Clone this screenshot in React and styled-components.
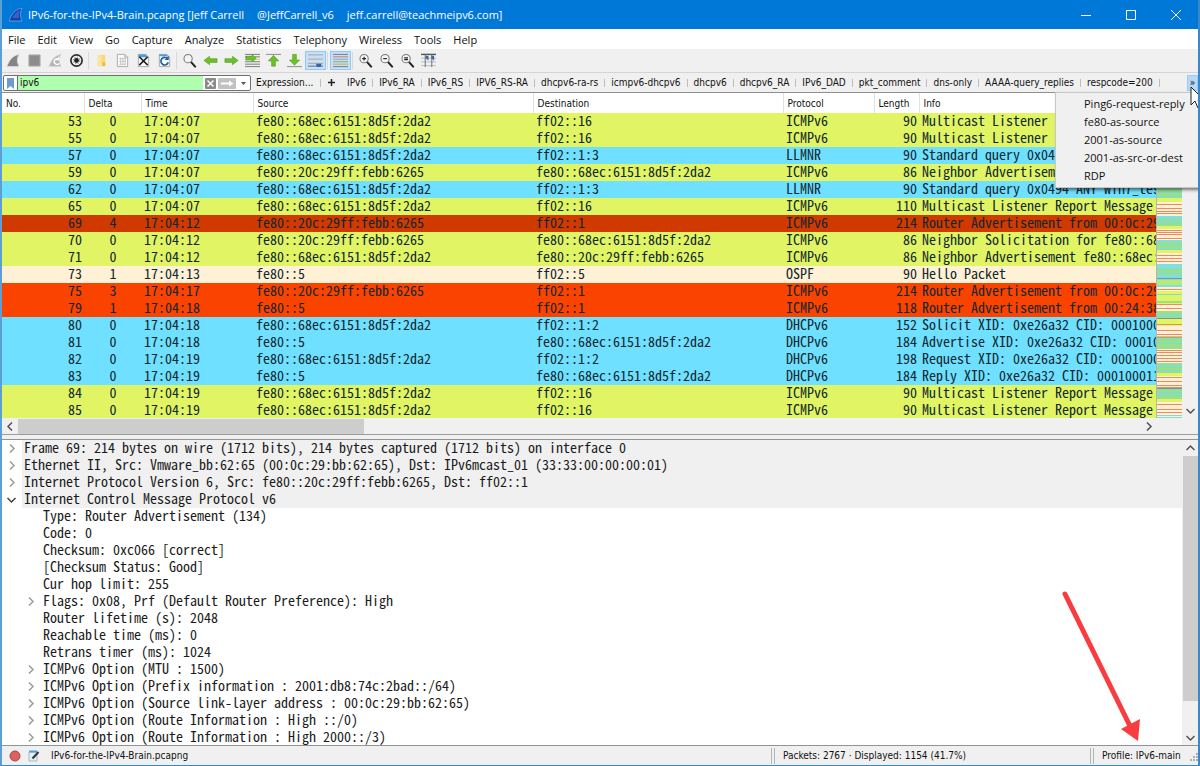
import React from "react";
import styled, { createGlobalStyle } from "styled-components";

const MONO = '"Noto Sans Mono CJK SC", "DejaVu Sans Mono", monospace';
const UI = '"Open Sans", "Noto Sans", sans-serif';
const SMALL = '"DejaVu Sans Condensed", "DejaVu Sans", sans-serif';

const ROW_COLORS = {
  icmp: { bg: "#e1f564", fg: "#12272e" },
  udp: { bg: "#6fe0ff", fg: "#12272e" },
  marked: { bg: "#d03900", fg: "#12272e" },
  router: { bg: "#fb4300", fg: "#12272e" },
  ospf: { bg: "#fff1d6", fg: "#12272e" },
};

const GlobalStyle = createGlobalStyle`
  * { box-sizing: border-box; }
  body { margin: 0; background: #fff; }
  button, input { font: inherit; color: inherit; margin: 0; }
  button { border: 0; padding: 0; background: none; white-space: nowrap; }
`;

const Window = styled.div`
  display: flex;
  flex-direction: column;
  height: 100vh;
  overflow: hidden;
  position: relative;
  border-left: 2px solid #5b9fd4;
  border-right: 2px solid #3b87cb;
  border-bottom: 1px solid #2b8bd4;
  background: #f0f0f0;
  font: 11px/18px ${UI};
  color: #111;
`;

const TitleBar = styled.header`
  display: flex;
  align-items: center;
  height: 29px;
  flex: none;
  margin: 0 -2px;
  padding: 0 2px 0 9px;
  background: #0078d7;
  color: #fff;
`;

const Title = styled.h1`
  display: flex;
  gap: 13px;
  flex: 1;
  margin: 0 0 0 5px;
  font: inherit;
  white-space: nowrap;
`;

const CaptionButton = styled.button`
  display: flex;
  align-items: center;
  justify-content: center;
  width: 45px;
  height: 29px;
`;

const MenuBar = styled.nav`
  display: flex;
  flex: none;
  height: 20px;
  padding: 2px 0 0;
  background: #fff;
`;

const MenuButton = styled.button`
  padding: 0 6px;
  line-height: 18px;
`;

const ToolBar = styled.div`
  display: flex;
  align-items: center;
  flex: none;
  height: 24px;
  padding-left: 1px;
  border-bottom: 1px solid #d4d4d4;
`;

const ToolButton = styled.button`
  display: flex;
  align-items: center;
  justify-content: center;
  width: 21px;
  height: 19px;
  border: 1px solid ${(p) => (p.$on ? "#90c8f6" : "transparent")};
  background: ${(p) => (p.$on ? "#c5e0f8" : "transparent")};
`;

const ToolDivider = styled.span`
  width: 1px;
  height: 17px;
  margin: 0 2px 0 1px;
  background: #d8d8d8;
`;

const FilterBar = styled.form`
  display: flex;
  align-items: center;
  flex: none;
  height: 20px;
  padding: 1px 0 0 1px;
  border-bottom: 1px solid #8f8f8f;
  font: 10px/16px ${SMALL};
`;

const FilterBox = styled.div`
  display: flex;
  align-items: center;
  width: 248px;
  height: 16px;
  flex: none;
  border: 1px solid #707070;
  border-radius: 2px;
  background: #fff;
`;

const FilterIconButton = styled.button`
  display: flex;
  align-items: center;
  justify-content: center;
  width: ${(p) => p.$width}px;
  height: 14px;
`;

const FilterInput = styled.input`
  flex: 1;
  min-width: 0;
  height: 14px;
  border: 0;
  border-left: 1px solid #707070;
  padding: 0 0 0 2px;
  outline: 0;
  background: #afffaf;
`;

const ExpressionButton = styled.button`
  width: 68px;
  margin-left: 1px;
  padding: 0 4px;
  text-align: left;
`;

const AddButton = styled.button`
  width: 20px;
`;

const FilterButton = styled.button`
  padding: 0 6px;
`;

const FilterDivider = styled.span`
  width: 1px;
  height: 8px;
  background: #bdbdbd;
`;

const MoreButton = styled.button`
  width: 11px;
  height: 16px;
  margin-left: auto;
  background: #b5d9f6;
  border: 1px solid #9accf5;
  line-height: 12px;
`;

const PacketPane = styled.section`
  flex: none;
  background: #fff;
  border-bottom: 1px solid #9c9c9c;
`;

const PacketBody = styled.div`
  display: flex;
  max-height: 325px;
  overflow: hidden;
`;

const TableClip = styled.div`
  flex: 1;
  min-width: 0;
  overflow: hidden;
  background: #fff;
`;

const PacketTable = styled.table`
  width: 100%;
  table-layout: fixed;
  border-collapse: collapse;
  font: 14px/15px ${MONO};
`;

const HeadCell = styled.th`
  width: ${(p) => p.$width};
  height: 20px;
  padding: 2px 4px 0;
  border-right: 1px solid #e2e2e2;
  background: #fff;
  font: 10px/18px ${SMALL};
  text-align: left;
`;

const PacketRow = styled.tr`
  background: ${(p) => ROW_COLORS[p.$kind].bg};
  color: ${(p) => ROW_COLORS[p.$kind].fg};
`;

const Cell = styled.td`
  height: 17px;
  padding: 0 2px 2px 3px;
  white-space: nowrap;
  text-align: ${(p) => p.$align || "left"};
`;

const MiniMap = styled.div`
  width: 26px;
  flex: none;
  padding-top: 20px;
  border-left: 1px solid #b5b5b5;
`;

const Scrollbar = styled.div`
  display: flex;
  flex-direction: ${(p) => (p.$horizontal ? "row" : "column")};
  justify-content: space-between;
  align-items: center;
  flex: none;
  width: ${(p) => (p.$horizontal ? "auto" : "16px")};
  height: ${(p) => (p.$horizontal ? "16px" : "auto")};
  padding-right: ${(p) => (p.$horizontal ? "42px" : "0")};
  background: #f0f0f0;
`;

const ScrollButton = styled.button`
  display: flex;
  align-items: center;
  justify-content: center;
  width: 16px;
  height: 16px;
`;

const HorizontalThumb = styled.div`
  width: 30%;
  height: 15px;
  margin-right: auto;
  background: #cdcdcd;
`;

const VerticalThumb = styled.div`
  width: 15px;
  flex: 0 0 245px;
  margin-bottom: auto;
  background: #cdcdcd;
`;

const DetailPane = styled.section`
  display: flex;
  flex: 1;
  min-height: 0;
  margin-top: 4px;
  border-top: 1px solid #8f9494;
  background: #fff;
`;

const Tree = styled.ul`
  flex: 1;
  min-width: 0;
  margin: 0;
  padding: 0 0 0 2px;
  overflow: hidden;
  list-style: none;
  font: 14px/15px ${MONO};
  color: #1b1b1b;
`;

const TreeItem = styled.li`
  display: flex;
  height: 17px;
  padding-left: ${(p) => (p.$child ? 19 : 0)}px;
  white-space: pre;
`;

const TreeToggle = styled.span`
  display: flex;
  align-items: center;
  justify-content: center;
  width: 15px;
  flex: none;
  margin-right: 3px;
`;

const TreeText = styled.span`
  flex: 1;
  padding: 0 0 2px 2px;
  background: ${(p) => (p.$shaded ? "#f0f0f0" : "transparent")};
`;

const StatusBar = styled.footer`
  display: flex;
  align-items: center;
  flex: none;
  height: 20px;
  border-top: 1px solid #8f9494;
  font: 10px/18px ${SMALL};
`;

const StatusButton = styled.button`
  display: flex;
  justify-content: center;
  width: 19px;
  margin-left: ${(p) => (p.$first ? 3 : 0)}px;
`;

const StatusText = styled.span`
  flex: ${(p) => p.$flex};
  padding-left: 8px;
  white-space: nowrap;
`;

const StatusGrip = styled.span`
  width: 4px;
  height: 16px;
  border: 1px solid #b4b4b4;
  border-width: 0 1px;
`;

const Popup = styled.ul`
  position: absolute;
  top: 92px;
  right: -2px;
  width: 145px;
  margin: 0;
  padding: 2px 0;
  list-style: none;
  background: #f0f0f0;
  border: 1px solid #c8c8c8;
  box-shadow: 2px 2px 3px rgba(0, 0, 0, 0.5);
`;

const PopupItem = styled.button`
  display: block;
  width: 100%;
  padding-left: 28px;
  font: 11px/18px ${UI};
  text-align: left;
`;

const Pointer = styled.svg`
  position: absolute;
  top: 86px;
  right: -8px;
`;

const Arrow = styled.svg`
  position: absolute;
  right: 56px;
  bottom: 21px;
`;

const Chevron = ({ dir, color = "#505050" }) => {
  const d = {
    left: "M6 .5 2 4.500 6 8.500",
    right: "M3 .5 7 4.500 3 8.500",
    up: "M.5 6 4.500 2 8.500 6",
    down: "M.5 3 4.500 7 8.500 3",
  }[dir];
  return (
    <svg width="9" height="9" viewBox="0 0 9 9" fill="none" stroke={color} strokeWidth="1.5">
      <path d={d} />
    </svg>
  );
};

const Page = () => (
  <>
    <path d="M2.5 1.5h8l3 3v10h-11z" fill="#fafafa" stroke="#a8a8a8" />
    <path d="M10.5 1.5v3h3" fill="none" stroke="#a8a8a8" />
  </>
);

const Lens = ({ children }) => (
  <>
    <path d="m9.5 9.500 4.500 5" stroke="#222" strokeWidth="2.200" strokeLinecap="round" />
    <circle cx="6.500" cy="6" r="4.400" fill="#f4f4f4" stroke="#777" strokeWidth="1.100" />
    <g stroke="#222" strokeWidth="1.200">{children}</g>
  </>
);

const Lines = ({ colors }) =>
  colors.map((c, i) => <path key={i} d={`M0 ${1.5 + i * 2.6}h16`} stroke={c} strokeWidth="1" />);

const GREEN = { fill: "#6cc02a", stroke: "#4c9a18", strokeWidth: 0.6 };

const ICONS = {
  start: <path d="M1 14.500C3 8 7 2.500 14 1.500c-2.500 4-2.500 8 0 13z" fill="#858585" stroke="#dadada" />,
  stop: <path d="M2 2h12v12H2z" fill="#8c8c8c" stroke="#b4b4b4" />,
  restart: (
    <>
      <path d="M1 14.500C3 8 7 2.500 14 1.500c-2.500 4-2.500 8 0 13z" fill="#b4b4b4" stroke="#dadada" />
      <path d="M11 6.500a3 3 0 1 0 1 4.500M11.500 4v3H8.500" fill="none" stroke="#fff" strokeWidth="1.500" />
    </>
  ),
  options: (
    <>
      <circle cx="8" cy="8" r="6" fill="#fff" stroke="#2d2d2d" strokeWidth="1.800" />
      <circle cx="8" cy="8" r="3.600" fill="none" stroke="#555" strokeWidth="1" strokeDasharray="1.400 1.400" />
      <circle cx="8" cy="8" r="2.600" fill="#222" />
    </>
  ),
  open: (
    <>
      <path d="M4 2h8v12H4z" fill="#ffd871" />
      <path d="M4 2h4v12H4z" fill="#fbe3a0" />
      <path d="M9 10h3v4H9z" fill="#eab84a" />
    </>
  ),
  save: (
    <>
      <Page />
      <path d="M4.500 6h7M4.500 9h7M4.500 12h7M6 5v8M8.500 5v8M11 5v8" stroke="#c4c4c4" />
    </>
  ),
  close: (
    <>
      <Page />
      <path d="M2.500 1.500h8l1.500 3h-9.500z" fill="#4aa0d8" />
      <path d="m3.500 4 9 9m0-9-9 9" stroke="#222" strokeWidth="1.700" />
    </>
  ),
  reload: (
    <>
      <Page />
      <path d="M2.500 1.500h8l1 2h-9z" fill="#4aa0d8" />
      <path d="M11.500 6.500a4 4 0 1 0 .5 3.500" fill="none" stroke="#1d62a8" strokeWidth="1.800" />
      <path d="M12.500 3v4.500H8z" fill="#1d62a8" />
    </>
  ),
  find: <Lens />,
  back: <path d="M1 8l6-4.500v2.500h8v4H7v2.500z" {...GREEN} />,
  forward: <path d="M15 8L9 3.500v2.500H1v4h8v2.500z" {...GREEN} />,
  goto: (
    <>
      <Lines colors={["#777", "#777", "#d8c94a", "#777", "#777", "#777"]} />
      <path d="M12 5.500 7.500 1.500v2H1v4h6.500v2z" {...GREEN} />
    </>
  ),
  first: (
    <>
      <path d="M0 1.500h16" stroke="#888" />
      <path d="M8 2.500 2.500 8.500H6v5.500h4V8.500h3.500z" {...GREEN} />
    </>
  ),
  last: (
    <>
      <path d="M0 14.500h16" stroke="#888" />
      <path d="M8 13 2.500 7.500H6V1.500h4v6h3.500z" {...GREEN} />
    </>
  ),
  autoscroll: (
    <>
      <path d="M0 2h16M0 6.500h16M0 11h16" stroke="#a9a39a" />
      <path d="M0 14h16" stroke="#666" />
      <path d="M8.500 11.500h6L13.500 15h-4z" fill="#3b62a8" />
    </>
  ),
  colorize: <Lines colors={["#777", "#e56a54", "#79a7d8", "#76b54c", "#d8a23d", "#777"]} />,
  zoomin: (
    <Lens>
      <path d="M4.500 6h4M6.500 4v4" />
    </Lens>
  ),
  zoomout: (
    <Lens>
      <path d="M4.500 6h4" />
    </Lens>
  ),
  zoomone: (
    <Lens>
      <path d="M4.500 5.200h4M4.500 7h4" />
    </Lens>
  ),
  resize: (
    <>
      <path d="M0 1.500h16" stroke="#555" strokeWidth="1.500" />
      <path d="M0 5.500h16M0 9.500h16M0 13.500h16" stroke="#bbb" />
      <path d="M4.500 1v14M11.500 1v14" stroke="#666" />
      <path d="M5 3h3v5l-3-2.500zM11 3H14v5l-3-2.500z" fill="#3b6ba5" />
    </>
  ),
};

const TOOLS = [
  ["start", "Start"], ["stop", "Stop"], ["restart", "Restart"], ["options", "Capture options"], null,
  ["open", "Open"], ["save", "Save"], ["close", "Close file"], ["reload", "Reload"], null,
  ["find", "Find packet"], ["back", "Back"], ["forward", "Forward"], ["goto", "Go to packet"],
  ["first", "First packet"], ["last", "Last packet"], ["autoscroll", "Auto scroll", true], null,
  ["colorize", "Colorize", true], null,
  ["zoomin", "Zoom in"], ["zoomout", "Zoom out"], ["zoomone", "Normal size"], ["resize", "Resize columns"],
];

const MENUS = ["File", "Edit", "View", "Go", "Capture", "Analyze", "Statistics", "Telephony", "Wireless", "Tools", "Help"];

const FILTERS = [
  "IPv6", "IPv6_RA", "IPv6_RS", "IPV6_RS-RA", "dhcpv6-ra-rs", "icmpv6-dhcpv6", "dhcpv6",
  "dhcpv6_RA", "IPv6_DAD", "pkt_comment", "dns-only", "AAAA-query_replies", "respcode=200",
];

const MORE_FILTERS = ["Ping6-request-reply", "fe80-as-source", "2001-as-source", "2001-as-src-or-dest", "RDP"];

const COLUMNS = [
  ["No.", "82px"], ["Delta", "57px"], ["Time", "112px"], ["Source", "280px"],
  ["Destination", "250px"], ["Protocol", "91px"], ["Length", "45px"], ["Info", "auto"],
];

const LONG = "fe80::68ec:6151:8d5f:2da2";
const ROUTER = "fe80::20c:29ff:febb:6265";

const PACKETS = [
  ["icmp", 53, 0, "17:04:07", LONG, "ff02::16", "ICMPv6", 90, "Multicast Listener Report Message"],
  ["icmp", 55, 0, "17:04:07", LONG, "ff02::16", "ICMPv6", 90, "Multicast Listener Report Message"],
  ["udp", 57, 0, "17:04:07", LONG, "ff02::1:3", "LLMNR", 90, "Standard query 0x0494 ANY Win7_tes"],
  ["icmp", 59, 0, "17:04:07", ROUTER, LONG, "ICMPv6", 86, "Neighbor Advertisement fe80::20c:"],
  ["udp", 62, 0, "17:04:07", LONG, "ff02::1:3", "LLMNR", 90, "Standard query 0x0494 ANY Win7_tes"],
  ["icmp", 65, 0, "17:04:07", LONG, "ff02::16", "ICMPv6", 110, "Multicast Listener Report Message"],
  ["marked", 69, 4, "17:04:12", ROUTER, "ff02::1", "ICMPv6", 214, "Router Advertisement from 00:0c:29"],
  ["icmp", 70, 0, "17:04:12", ROUTER, LONG, "ICMPv6", 86, "Neighbor Solicitation for fe80::68"],
  ["icmp", 71, 0, "17:04:12", LONG, ROUTER, "ICMPv6", 86, "Neighbor Advertisement fe80::68ec:"],
  ["ospf", 73, 1, "17:04:13", "fe80::5", "ff02::5", "OSPF", 90, "Hello Packet"],
  ["router", 75, 3, "17:04:17", ROUTER, "ff02::1", "ICMPv6", 214, "Router Advertisement from 00:0c:29"],
  ["router", 79, 1, "17:04:18", "fe80::5", "ff02::1", "ICMPv6", 118, "Router Advertisement from 00:24:38"],
  ["udp", 80, 0, "17:04:18", LONG, "ff02::1:2", "DHCPv6", 152, "Solicit XID: 0xe26a32 CID: 0001000"],
  ["udp", 81, 0, "17:04:18", "fe80::5", LONG, "DHCPv6", 184, "Advertise XID: 0xe26a32 CID: 00010"],
  ["udp", 82, 0, "17:04:19", LONG, "ff02::1:2", "DHCPv6", 198, "Request XID: 0xe26a32 CID: 0001000"],
  ["udp", 83, 0, "17:04:19", "fe80::5", LONG, "DHCPv6", 184, "Reply XID: 0xe26a32 CID: 000100011"],
  ["icmp", 84, 0, "17:04:19", LONG, "ff02::16", "ICMPv6", 90, "Multicast Listener Report Message"],
  ["icmp", 85, 0, "17:04:19", LONG, "ff02::16", "ICMPv6", 90, "Multicast Listener Report Message"],
];

const ALIGN = ["right", "center", "left", "left", "left", "left", "right", "left"];

const DETAILS = [
  [0, "right", "Frame 69: 214 bytes on wire (1712 bits), 214 bytes captured (1712 bits) on interface 0"],
  [0, "right", "Ethernet II, Src: Vmware_bb:62:65 (00:0c:29:bb:62:65), Dst: IPv6mcast_01 (33:33:00:00:00:01)"],
  [0, "right", "Internet Protocol Version 6, Src: fe80::20c:29ff:febb:6265, Dst: ff02::1"],
  [0, "down", "Internet Control Message Protocol v6"],
  [1, "", "Type: Router Advertisement (134)"],
  [1, "", "Code: 0"],
  [1, "", "Checksum: 0xc066 [correct]"],
  [1, "", "[Checksum Status: Good]"],
  [1, "", "Cur hop limit: 255"],
  [1, "right", "Flags: 0x08, Prf (Default Router Preference): High"],
  [1, "", "Router lifetime (s): 2048"],
  [1, "", "Reachable time (ms): 0"],
  [1, "", "Retrans timer (ms): 1024"],
  [1, "right", "ICMPv6 Option (MTU : 1500)"],
  [1, "right", "ICMPv6 Option (Prefix information : 2001:db8:74c:2bad::/64)"],
  [1, "right", "ICMPv6 Option (Source link-layer address : 00:0c:29:bb:62:65)"],
  [1, "right", "ICMPv6 Option (Route Information : High ::/0)"],
  [1, "right", "ICMPv6 Option (Route Information : High 2000::/3)"],
];

/* Minimap bands as [start, end, colour], in pixels from the first packet. */
const Y = "#e1f564";
const C = "#fff1d6";
const B = "#7fdfe6";
const G = "#98e08c";
const BANDS = [
  [0, 75, Y], [75, 85, G], [85, 89, Y], [89, 103, C], [103, 106, B], [106, 113, G], [113, 116, Y],
  [116, 127, C], [127, 129, B], [129, 137, G], [137, 140, Y], [140, 151, C], [151, 155, B],
  [155, 162, G], [162, 167, B], [167, 172, "#b9ea78"], [172, 174, B], [174, 178, C], [178, 188, Y], [188, 190, G],
  [190, 192, Y], [192, 198, C], [198, 206, G], [206, 213, Y], [213, 223, C], [223, 236, G],
  [236, 250, C], [250, 260, G], [260, 263, Y], [263, 275, C], [275, 286, G], [286, 289, Y], [289, 305, C],
];
const TEAL = [76, 79, 83, 105, 108, 110, 132, 136, 156, 160, 163, 181, 201, 203, 226, 230, 252, 254, 257, 276, 279, 282, 302, 304];
const RED = [91, 95, 98, 100, 117, 119, 121, 125, 142, 145, 148, 176, 191, 195, 211, 217, 221, 224, 237, 239, 242, 245, 248, 264, 268, 272, 274, 291, 296, 299];
const GRAY = [165, 205, 275];

const FIN = "M0 13C2 7 6 1 13 0c-2 4-2 9 0 13z";

export default function App() {
  return (
    <Window>
      <GlobalStyle />
      <TitleBar>
        <svg width="14" height="14" viewBox="0 0 14 14">
          <path d={FIN} fill="#1a3fa0" stroke="#78b7ee" strokeWidth="0.700" />
          <path d="M3 10C5 6 8 3 11 2c-1 3-1 5-1 8z" fill="#2d62cf" />
        </svg>
        <Title>
          <span>IPv6-for-the-IPv4-Brain.pcapng [Jeff Carrell</span>
          <span>@JeffCarrell_v6</span>
          <span>jeff.carrell@teachmeipv6.com]</span>
        </Title>
        <CaptionButton aria-label="Minimize">
          <svg width="10" height="10" stroke="#fff"><path d="M0 5.500h10" /></svg>
        </CaptionButton>
        <CaptionButton aria-label="Maximize">
          <svg width="10" height="10" fill="none" stroke="#fff"><path d="M.5.5h9v9h-9z" /></svg>
        </CaptionButton>
        <CaptionButton aria-label="Close">
          <svg width="10" height="10" stroke="#fff"><path d="m0 0 10 10M10 0 0 10" /></svg>
        </CaptionButton>
      </TitleBar>

      <MenuBar>
        {MENUS.map((m) => <MenuButton key={m}>{m}</MenuButton>)}
      </MenuBar>

      <ToolBar>
        {TOOLS.map((t, i) =>
          t ? (
            <ToolButton key={i} $on={t[2]} aria-label={t[1]}>
              <svg width="15" height="15" viewBox="0 0 16 16" fill="none">{ICONS[t[0]]}</svg>
            </ToolButton>
          ) : (
            <ToolDivider key={i} />
          )
        )}
      </ToolBar>

      <FilterBar onSubmit={(e) => e.preventDefault()}>
        <FilterBox>
          <FilterIconButton type="button" $width={13} aria-label="Bookmarks">
            <svg width="7" height="11"><path d="M0 0h7v11L3.500 8 0 11z" fill="#6f9bd1" /></svg>
          </FilterIconButton>
          <FilterInput aria-label="Display filter" defaultValue="ipv6" />
          <FilterIconButton type="button" $width={14} aria-label="Clear filter">
            <svg width="11" height="11">
              <rect width="11" height="11" rx="1" fill="#8a8a8a" />
              <path d="m2.500 2.500 6 6m0-6-6 6" stroke="#fff" strokeWidth="1.500" />
            </svg>
          </FilterIconButton>
          <FilterIconButton $width={20} aria-label="Apply filter">
            <svg width="18" height="11">
              <rect width="18" height="11" rx="1" fill="#c2c2c2" />
              <path d="M3 4.500h8v-2l4.500 3-4.500 3v-2H3z" fill="#fff" />
            </svg>
          </FilterIconButton>
          <FilterIconButton type="button" $width={13} aria-label="Filter history">
            <svg width="5" height="3"><path d="M0 0h5L2.500 3z" fill="#555" /></svg>
          </FilterIconButton>
        </FilterBox>
        <ExpressionButton type="button">Expression...</ExpressionButton>
        <FilterDivider />
        <AddButton type="button" aria-label="Add filter button">
          <svg width="7" height="7" stroke="#222" strokeWidth="1.500"><path d="M0 3.500h7M3.500 0v7" /></svg>
        </AddButton>
        {FILTERS.map((f) => (
          <React.Fragment key={f}>
            <FilterButton type="button">{f}</FilterButton>
            <FilterDivider />
          </React.Fragment>
        ))}
        <MoreButton type="button">»</MoreButton>
      </FilterBar>

      <PacketPane>
        <PacketBody>
          <TableClip>
            <PacketTable>
              <thead>
                <tr>
                  {COLUMNS.map(([name, w]) => <HeadCell key={name} $width={w}>{name}</HeadCell>)}
                </tr>
              </thead>
              <tbody>
                {PACKETS.map(([kind, ...cells]) => (
                  <PacketRow key={cells[0]} $kind={kind}>
                    {cells.map((c, i) => <Cell key={i} $align={ALIGN[i]}>{c}</Cell>)}
                  </PacketRow>
                ))}
              </tbody>
            </PacketTable>
          </TableClip>
          <MiniMap>
            <svg width="25" height="305" shapeRendering="crispEdges">
              {BANDS.map(([a, b, c]) => <rect key={a} y={a} width="25" height={b - a} fill={c} />)}
              {TEAL.map((y) => <rect key={y} y={y} width="25" height="1" fill="#7cdcd8" />)}
              {RED.map((y) => <rect key={y} y={y} width="25" height="1" fill="#ee8a60" />)}
              {GRAY.map((y) => <rect key={y} y={y} width="25" height="1" fill="#8c9080" />)}
            </svg>
          </MiniMap>
          <Scrollbar>
            <ScrollButton aria-label="Scroll up"><Chevron dir="up" /></ScrollButton>
            <ScrollButton aria-label="Scroll down"><Chevron dir="down" /></ScrollButton>
          </Scrollbar>
        </PacketBody>
        <Scrollbar $horizontal>
          <ScrollButton aria-label="Scroll left"><Chevron dir="left" /></ScrollButton>
          <HorizontalThumb />
          <ScrollButton aria-label="Scroll right"><Chevron dir="right" /></ScrollButton>
        </Scrollbar>
      </PacketPane>

      <DetailPane>
        <Tree>
          {DETAILS.map(([child, arrow, text], i) => (
            <TreeItem key={i} $child={child}>
              <TreeToggle>
                {arrow && <Chevron dir={arrow} color={arrow === "down" ? "#404040" : "#9a9a9a"} />}
              </TreeToggle>
              <TreeText $shaded={!child}>{text}</TreeText>
            </TreeItem>
          ))}
        </Tree>
        <Scrollbar>
          <ScrollButton aria-label="Scroll up"><Chevron dir="up" /></ScrollButton>
          <VerticalThumb />
          <ScrollButton aria-label="Scroll down"><Chevron dir="down" /></ScrollButton>
        </Scrollbar>
      </DetailPane>

      <StatusBar>
        <StatusButton $first aria-label="Expert information">
          <svg width="12" height="12"><circle cx="6" cy="6" r="5" fill="#e0605f" stroke="#a04848" /></svg>
        </StatusButton>
        <StatusButton aria-label="Capture comment">
          <svg width="12" height="12" fill="none">
            <path d="M1 2h8v9H1z" fill="#e3eef5" stroke="#a9b9c4" />
            <path d="M1 1.500h8" stroke="#4aa0d8" strokeWidth="2" />
            <path d="m4.500 8.500 6-6.500" stroke="#333" strokeWidth="2" />
          </svg>
        </StatusButton>
        <StatusText $flex="1">IPv6-for-the-IPv4-Brain.pcapng</StatusText>
        <StatusGrip />
        <StatusText $flex="0 0 315px">Packets: 2767 · Displayed: 1154 (41.7%)</StatusText>
        <StatusGrip />
        <StatusText $flex="0 0 96px">Profile: IPv6-main</StatusText>
        <svg width="8" height="12" fill="#b0b0b0">
          <path d="M6 3h2v2H6zM3 6h2v2H3zM6 6h2v2H6zM0 9h2v2H0zM3 9h2v2H3zM6 9h2v2H6z" />
        </svg>
      </StatusBar>

      <Popup>
        {MORE_FILTERS.map((f) => (
          <li key={f}><PopupItem>{f}</PopupItem></li>
        ))}
      </Popup>
      <Pointer width="16" height="24" viewBox="0 0 16 24">
        <path d="M1 1v18l4-4 3 7 3-1.500-3-6.500h6z" fill="#fff" stroke="#222" />
      </Pointer>
      <Arrow width="82" height="154" viewBox="0 0 82 154">
        <path d="m5 4 65 132" stroke="#f93c40" strokeWidth="5" strokeLinecap="round" />
        <path d="M61 139 80 129l-2 22z" fill="#f93c40" />
      </Arrow>
    </Window>
  );
}
